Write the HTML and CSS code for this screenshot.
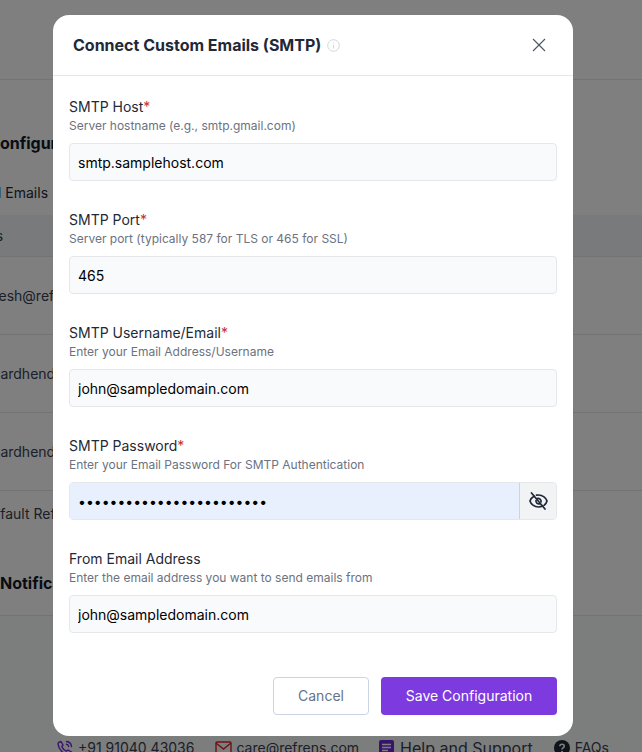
FILE: index.html
```html
<!DOCTYPE html>
<html lang="en">
<head>
<meta charset="utf-8">
<title>Connect Custom Emails (SMTP)</title>
<link rel="stylesheet" href="styles.css">
</head>
<body>
<div class="page">
  <div class="topbar"></div>
  <h2 class="section-title config-title">Email Configuration</h2>
  <div class="tab"><span class="tab-mark">l</span> Emails</div>
  <div class="table">
    <div class="row head"><span class="head-label">Sender Emails</span></div>
    <div class="row tall"><span class="cell">rajesh@refrens.com</span></div>
    <div class="row tall"><span class="cell">Dhardhendu@refrens.com</span></div>
    <div class="row tall"><span class="cell">Dhardhendu@refrens.com</span></div>
    <div class="row last"><span class="cell">Default Refrens Email</span></div>
  </div>
  <h2 class="section-title notify-title">Notifications</h2>
  <div class="lower">
    <div class="footer">
      <span class="foot-item phone">
        <svg class="foot-icon" width="16" height="16" viewBox="0 0 16 16" fill="none" stroke="#6d28d9" stroke-width="1.4" stroke-linecap="round" stroke-linejoin="round"><path d="M4 1.500 6 5 4.800 6.600c.8 2 2.400 3.600 4.500 4.600L11 10l3.500 2-1 2.200c-.3.500-.8.800-1.400.700C6.400 14.300 1.700 9.600 1 3.900c-.1-.6.200-1.100.7-1.400z"/><path d="M9.500 1.500c2.800.3 4.700 2.200 5 5M9.500 4.300c1.200.2 2 1 2.200 2.200"/></svg>
        +91 91040 43036
      </span>
      <span class="foot-item mail">
        <svg class="foot-icon" width="17" height="16" viewBox="0 0 17 16" fill="none" stroke="#dc2626" stroke-width="1.400"><rect x="1" y="2" width="15" height="12" rx="1"/><path d="M1 3l7.500 6L16 3"/></svg>
        care@refrens.com
      </span>
      <span class="foot-item help">
        <svg class="foot-icon" width="15" height="16" viewBox="0 0 15 16"><rect width="15" height="16" rx="2" fill="#6d28d9"/><path d="M3 4.500h9M3 7.500h9M3 10.500h6" stroke="#fff" stroke-width="1.400"/></svg>
        Help and Support
      </span>
      <span class="foot-item faq">
        <svg class="foot-icon" width="16" height="16" viewBox="0 0 16 16"><circle cx="8" cy="8" r="8" fill="#1f2937"/><path d="M5.800 6.200C5.900 5 6.800 4.300 8 4.300c1.300 0 2.200.8 2.200 1.900 0 1.700-2.200 1.600-2.200 3.300" fill="none" stroke="#fff" stroke-width="1.600"/><circle cx="8" cy="11.800" r="1" fill="#fff"/></svg>
        FAQs
      </span>
    </div>
  </div>
</div>

<div class="backdrop"></div>

<section class="modal">
  <header class="modal-head">
    <h1 class="modal-title">Connect Custom Emails (SMTP)</h1>
    <svg class="info-icon" width="13" height="13" viewBox="0 0 13 13" fill="none" stroke="#d1d5db"><circle cx="6.500" cy="6.500" r="5.800"/><path d="M6.500 5.800v3.700M6.500 3.400v1"/></svg>
    <svg class="close-icon" width="14" height="14" viewBox="0 0 14 14" fill="none" stroke="#4b5563" stroke-width="1.100"><path d="M1 1l12 12M13 1L1 13"/></svg>
  </header>
  <div class="modal-body">
    <div class="field">
      <label class="label">SMTP Host<span class="req">*</span></label>
      <p class="hint">Server hostname (e.g., smtp.gmail.com)</p>
      <input class="input" type="text" value="smtp.samplehost.com">
    </div>
    <div class="field">
      <label class="label">SMTP Port<span class="req">*</span></label>
      <p class="hint">Server port (typically 587 for TLS or 465 for SSL)</p>
      <input class="input" type="text" value="465">
    </div>
    <div class="field">
      <label class="label">SMTP Username/Email<span class="req">*</span></label>
      <p class="hint">Enter your Email Address/Username</p>
      <input class="input" type="text" value="john@sampledomain.com">
    </div>
    <div class="field">
      <label class="label">SMTP Password<span class="req">*</span></label>
      <p class="hint">Enter your Email Password For SMTP Authentication</p>
      <div class="password">
        <input class="input pass-input" type="password" value="abcdefghijklmnopqrstuvwx">
        <span class="eye">
          <svg width="19" height="18" viewBox="0 0 19 18" fill="none" stroke="#1f2937" stroke-width="1.700" stroke-linecap="round"><path d="M5 4.200C2.800 5.400 1.300 7.500 1 9c.8 3 4.300 6 8.500 6 1.700 0 3.200-.5 4.500-1.200M7.500 3.200c.6-.1 1.300-.2 2-.2 4.200 0 7.700 3 8.500 6-.4 1.500-1.300 2.900-2.600 4"/><path d="M2.500 1l13.500 16"/><path d="M8 6.500a3 3 0 0 1 4 3.500M7 8.500a3 3 0 0 0 3.500 3.400"/></svg>
        </span>
      </div>
    </div>
    <div class="field">
      <label class="label">From Email Address</label>
      <p class="hint">Enter the email address you want to send emails from</p>
      <input class="input" type="text" value="john@sampledomain.com">
    </div>
  </div>
  <footer class="modal-foot">
    <button class="btn cancel" type="button">Cancel</button>
    <button class="btn save" type="button">Save Configuration</button>
  </footer>
</section>
</body>
</html>
```

FILE: styles.css
```css
* { box-sizing: border-box; }
html, body { margin: 0; height: 752px; overflow: hidden; background: #fff; }
body { font-family: Inter, "Liberation Sans", sans-serif; color: #1f2937; position: relative; }

/* page behind the dialog */
.page { height: 752px; overflow: hidden; display: flex; flex-direction: column; }
.page > * { flex: none; }
.topbar { height: 80px; border-bottom: 1px solid #e5e7eb; }
.section-title { margin: 0; font-size: 16px; font-weight: 700; line-height: 20px; white-space: nowrap; color: #111827; }
.config-title { margin: 53px 0 0 -58px; }
.tab { margin: 30px 0 0 -2px; height: 32px; font-size: 14px; line-height: 20px; white-space: nowrap; color: #1f2937; }
.tab-mark { color: #2563eb; }
.table { font-size: 14px; color: #374151; }
.row { border-bottom: 1px solid #e5e7eb; display: flex; align-items: center; white-space: nowrap; }
.head { height: 42px; background: #f3f4f6; }
.tall { height: 78px; }
.last { height: 44px; border-bottom: 0; }
.head-label { margin-left: -91px; }
.cell { margin-left: -18px; }
.notify-title { margin: 38px 0 0 0; }
.lower { margin-top: 22px; height: 137px; border-top: 1px solid #e5e7eb; background: #f9fafb; overflow: hidden; }
.footer { margin-top: 122px; padding-left: 57px; display: flex; align-items: center; color: #374151; font-size: 14px; line-height: 20px; white-space: nowrap; }
.foot-item { display: flex; align-items: center; gap: 5px; }
.foot-icon { flex: none; }
.mail { margin-left: 21px; gap: 4px; }
.help { margin-left: 20px; font-size: 16px; gap: 6px; }
.faq { margin-left: 21px; font-size: 14px; }

.backdrop { position: absolute; inset: 0; background: rgba(0, 0, 0, .5); }

/* dialog */
.modal { position: absolute; left: 53px; top: 15px; width: 520px; height: 721px; background: #fff; border-radius: 16px; display: flex; flex-direction: column; overflow: hidden; }
.modal-head { height: 61px; flex: none; border-bottom: 1px solid #e5e7eb; padding: 0 27px 0 20px; display: flex; align-items: center; }
.modal-title { margin: 0; font-size: 16px; font-weight: 700; line-height: 24px; color: #1f2937; }
.info-icon { margin-left: 6px; }
.close-icon { margin-left: auto; }
.modal-body { flex: 1; padding: 21px 16px 0; display: flex; flex-direction: column; gap: 29px; }
.field { display: flex; flex-direction: column; }
.label { font-size: 14px; line-height: 20px; color: #1f2937; }
.req { color: #c53030; }
.hint { margin: 0 0 8px; font-size: 12px; line-height: 18px; color: #6b7280; }
.input { width: 100%; height: 38px; padding: 0 8px; border: 1px solid #e5e7eb; border-radius: 4px; background: #f9fafc; font: 400 14px/20px Inter, "Liberation Sans", sans-serif; color: #000; outline: none; }
.password { display: flex; height: 38px; border: 1px solid #e5e7eb; border-radius: 4px; overflow: hidden; }
.pass-input { flex: 1; min-width: 0; height: 36px; border: 0; border-radius: 0; background: #e8f0fe; padding: 0 8px; }
.eye { width: 37px; flex: none; border-left: 1px solid #cbd5e1; background: #f1f3f5; display: flex; align-items: center; justify-content: center; }
.modal-foot { flex: none; padding: 0 16px 21px; display: flex; justify-content: flex-end; gap: 12px; }
.btn { height: 38px; border-radius: 4px; font: 400 14px/20px Inter, "Liberation Sans", sans-serif; }
.cancel { width: 96px; border: 1px solid #cbd5e1; background: #fff; color: #64748b; }
.save { width: 176px; border: 0; background: #7c3adf; color: #fff; }
```
